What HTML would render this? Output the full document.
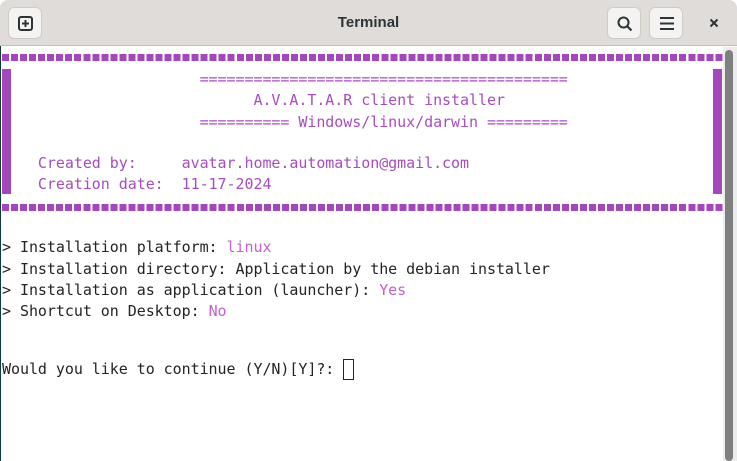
<!DOCTYPE html>
<html><head><meta charset="utf-8"><style>
*{margin:0;padding:0;box-sizing:border-box}
body{width:737px;height:461px;overflow:hidden;background:#fff;position:relative;font-family:"DejaVu Sans Mono","Liberation Mono",monospace}
#tb{position:absolute;left:0;top:0;width:737px;height:46px;background:#dfdcd9;border-bottom:1px solid #c4c1bd;border-top-left-radius:8px;border-top-right-radius:8px}
.btn{position:absolute;top:7px;width:34px;height:32px;background:#f4f3f2;border:1px solid #cfccc8;border-radius:6px}
#title{position:absolute;top:0;left:0;width:737px;line-height:45px;text-align:center;font-family:"Liberation Sans",sans-serif;font-weight:bold;font-size:15px;color:#2e3436}
.l{position:absolute;left:2px;white-space:pre;font-size:15px;line-height:21px;height:21px;color:#242424;letter-spacing:-0.05px}
.p{color:#a64dbd}
.m{color:#c45fcf}
.sq{position:absolute;left:2px;width:722px;height:7px;background:repeating-linear-gradient(90deg,#a347ba 0,#a347ba 7px,transparent 7px,transparent 9.03px)}
.bar{position:absolute;top:69px;width:9px;height:125px;background:#a347ba}
</style></head><body>
<div id="tb">
<div class="btn" style="left:8px"><svg width="34" height="32" viewBox="0 0 34 32"><rect x="10" y="9" width="13" height="13" rx="2" fill="none" stroke="#2e3436" stroke-width="2"/><path d="M16.5 12v7M13 15.5h7" stroke="#2e3436" stroke-width="2"/></svg></div>
<div id="title">Terminal</div>
<div class="btn" style="left:607px"><svg width="34" height="32" viewBox="0 0 34 32"><circle cx="15.5" cy="14.5" r="5" fill="none" stroke="#2e3436" stroke-width="2"/><path d="M19 18l4.5 4.5" stroke="#2e3436" stroke-width="2.2"/></svg></div>
<div class="btn" style="left:649px"><svg width="34" height="32" viewBox="0 0 34 32"><path d="M10 10h14M10 15.5h14M10 21h14" stroke="#2e3436" stroke-width="2"/></svg></div>
<svg style="position:absolute;left:706px;top:15px" width="16" height="16" viewBox="0 0 16 16"><path d="M4.5 4.5l7 7M11.5 4.5l-7 7" stroke="#2e3436" stroke-width="2"/></svg>
</div>
<div style="position:absolute;left:0;top:46px;width:1px;height:415px;background:#0e3b3f"></div>
<div style="position:absolute;left:723px;top:47px;width:14px;height:414px;background:#ececec"></div>
<div style="position:absolute;left:725px;top:50px;width:8px;height:411px;background:#7e7f7f;border-radius:4px"></div>
<div class="sq" style="top:54px"></div>
<div class="sq" style="top:204px"></div>
<div class="bar" style="left:2px"></div>
<div class="bar" style="left:713px"></div>
<div class="l p" style="top:69px">                      =========================================</div>
<div class="l p" style="top:90px">                            A.V.A.T.A.R client installer</div>
<div class="l p" style="top:112px">                      ========== Windows/linux/darwin =========</div>
<div class="l p" style="top:153px">    Created by:     avatar.home.automation@gmail.com</div>
<div class="l p" style="top:174px">    Creation date:  11-17-2024</div>
<div class="l" style="top:237px">&gt; Installation platform: <span class="m">linux</span></div>
<div class="l" style="top:259px">&gt; Installation directory: Application by the debian installer</div>
<div class="l" style="top:280px">&gt; Installation as application (launcher): <span class="m">Yes</span></div>
<div class="l" style="top:301px">&gt; Shortcut on Desktop: <span class="m">No</span></div>
<div class="l" style="top:359px">Would you like to continue (Y/N)[Y]?: </div>
<div style="position:absolute;left:343px;top:359px;width:11px;height:21px;border:1px solid #242424"></div>
</body></html>
